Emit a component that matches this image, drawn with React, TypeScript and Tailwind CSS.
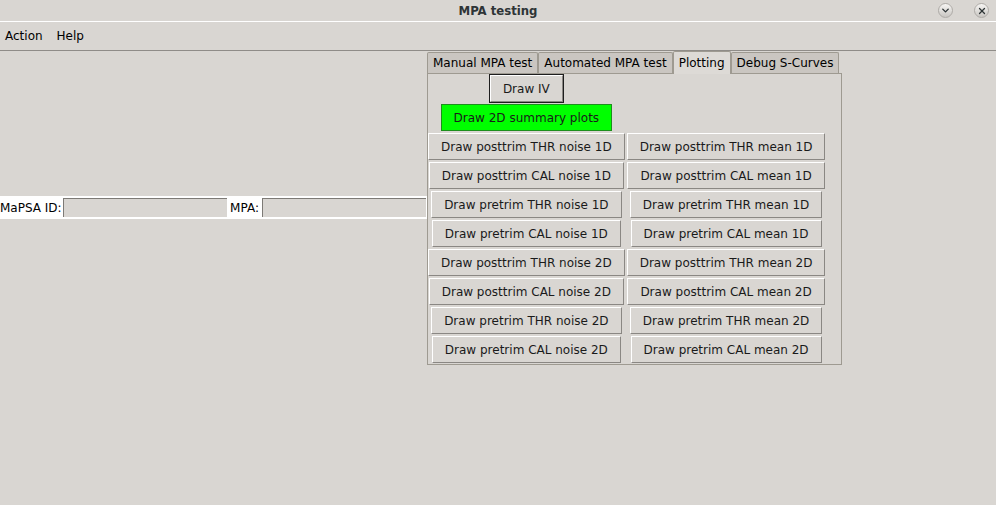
import { Fragment } from 'react'
import { ChevronDown, X } from 'lucide-react'

const rows: [string, string][] = [
  ['Draw posttrim THR noise 1D', 'Draw posttrim THR mean 1D'],
  ['Draw posttrim CAL noise 1D', 'Draw posttrim CAL mean 1D'],
  ['Draw pretrim THR noise 1D', 'Draw pretrim THR mean 1D'],
  ['Draw pretrim CAL noise 1D', 'Draw pretrim CAL mean 1D'],
  ['Draw posttrim THR noise 2D', 'Draw posttrim THR mean 2D'],
  ['Draw posttrim CAL noise 2D', 'Draw posttrim CAL mean 2D'],
  ['Draw pretrim THR noise 2D', 'Draw pretrim THR mean 2D'],
  ['Draw pretrim CAL noise 2D', 'Draw pretrim CAL mean 2D'],
]

const tabs = ['Manual MPA test', 'Automated MPA test', 'Plotting', 'Debug S-Curves']

function TkButton({ label }: { label: string }) {
  return (
    <button className="h-[27px] px-3 flex items-center justify-center whitespace-nowrap bg-[#d9d6d2] border border-t-white border-l-white border-b-[#8a8783] border-r-[#8a8783] text-[#1a1a1a]">
      {label}
    </button>
  )
}

function WinButton({ children }: { children: React.ReactNode }) {
  return (
    <div className="w-[15px] h-[15px] rounded-full border border-[#aeaba7] bg-gradient-to-b from-[#f6f5f3] to-[#c9c6c2] flex items-center justify-center text-[#2e3436]">
      {children}
    </div>
  )
}

export default function App() {
  return (
    <div className="w-[996px] h-[505px] overflow-hidden bg-[#d9d6d2] flex flex-col font-['DejaVu_Sans',sans-serif] text-[12px] text-black">
      {/* title bar */}
      <div className="relative h-[21px] flex items-center justify-center">
        <span className="font-['DejaVu_Sans_Condensed','DejaVu_Sans',sans-serif] font-bold text-[13px] text-[#2e3436]">
          MPA testing
        </span>
        <div className="absolute right-[7px] top-[3px] flex gap-[21px]">
          <WinButton>
            <ChevronDown size={11} strokeWidth={3} />
          </WinButton>
          <WinButton>
            <X size={10} strokeWidth={3} />
          </WinButton>
        </div>
      </div>
      <div className="h-px bg-white" />

      {/* menu */}
      <div className="h-[29px] flex items-center gap-[14px] px-[5px] border-b border-[#8f8c88]">
        <span>Action</span>
        <span>Help</span>
      </div>

      {/* body */}
      <div className="flex items-start">
        <div className="w-[427px] h-[315px] flex items-center pb-[2px]">
          <div className="w-full h-[23px] bg-white flex items-center">
            <span className="w-[63px]">MaPSA ID:</span>
            <div className="w-[164px] h-[19px] bg-[#d9d6d2] border-t border-l border-[#7d7a76]" />
            <span className="w-[35px] text-center">MPA:</span>
            <div className="w-[164px] h-[19px] bg-[#d9d6d2] border-t border-l border-[#7d7a76]" />
          </div>
        </div>

        {/* notebook */}
        <div className="w-[415px] flex flex-col">
          <div className="flex items-end h-[22px]">
            {tabs.map((t) => (
              <div
                key={t}
                className={
                  t === 'Plotting'
                    ? 'h-[23px] -mb-px px-[5px] flex items-center bg-[#dddad6] border border-b-0 border-[#9e9a91] rounded-t-[2px] relative z-10 whitespace-nowrap'
                    : 'h-[21px] px-[5px] flex items-center bg-[#cac6c1] border border-b-0 border-[#9e9a91] rounded-t-[2px] whitespace-nowrap'
                }
              >
                {t}
              </div>
            ))}
          </div>
          <div className="h-[292px] border border-[#9e9a91] bg-[#d9d6d2]">
            <div className="grid grid-cols-[auto_auto] justify-start justify-items-center gap-x-[2px] w-max">
              <div className="h-[29px] flex items-center">
                <div className="border border-[#1e1e1e]">
                  <TkButton label="Draw IV" />
                </div>
              </div>
              <div />
              <div className="h-[29px] flex items-center">
                <button className="h-[27px] px-3 flex items-center whitespace-nowrap bg-[#00ff00] border border-[#1c8f1c] text-[#1a1a1a]">
                  Draw 2D summary plots
                </button>
              </div>
              <div />
              {rows.map(([a, b]) => (
                <Fragment key={a}>
                  <div className="h-[29px] flex items-center">
                    <TkButton label={a} />
                  </div>
                  <div className="h-[29px] flex items-center">
                    <TkButton label={b} />
                  </div>
                </Fragment>
              ))}
            </div>
          </div>
        </div>
      </div>
    </div>
  )
}
